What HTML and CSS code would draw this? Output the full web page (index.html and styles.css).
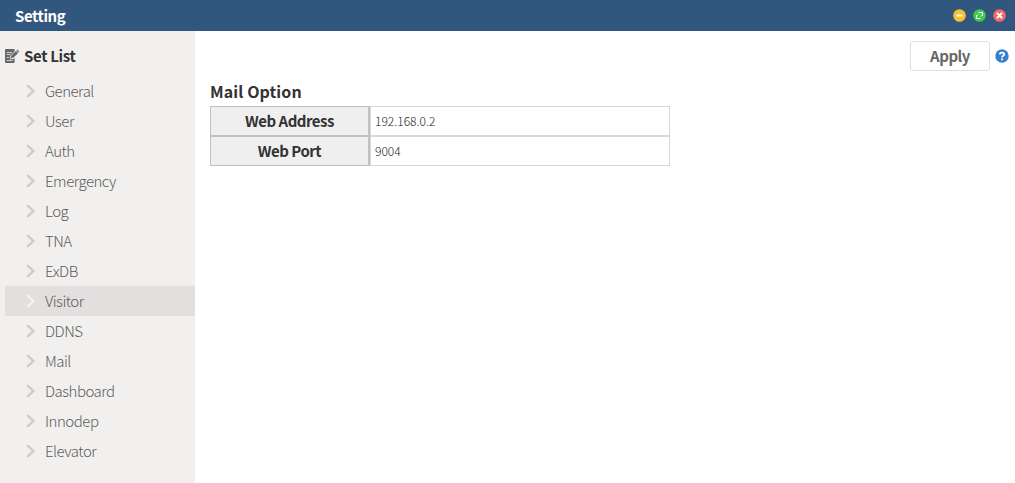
FILE: index.html
```html
<!DOCTYPE html>
<html lang="en">
<head>
<meta charset="utf-8">
<title>Setting</title>
<link rel="stylesheet" href="styles.css">
</head>
<body>
<svg width="0" height="0" class="defs">
  <symbol id="chev" viewBox="0 0 10 14"><path d="M1.2 1.1 7.4 7 1.2 12.9" fill="none" stroke="currentColor" stroke-width="2.3"/></symbol>
</svg>
<header class="titlebar">
  <h1 class="title">Setting</h1>
  <div class="controls">
    <svg viewBox="0 0 13 13"><circle cx="6.5" cy="6.5" r="6.3" fill="#f8c132"/><path d="M3.5 6.5h6" stroke="#fff" stroke-width="2"/></svg>
    <svg viewBox="0 0 13 13"><circle cx="6.5" cy="6.5" r="6.3" fill="#3dcb4b"/><path d="M5.5 3.5h4V7M7.5 9.5h-4V6M3.5 7 5 5.5M9.5 6 8 7.5" fill="none" stroke="#fff" stroke-width="1"/></svg>
    <svg viewBox="0 0 13 13"><circle cx="6.5" cy="6.5" r="6.3" fill="#f1696b"/><path d="m3.9 3.9 5.2 5.2m0-5.2L3.9 9.1" stroke="#fff" stroke-width="2"/></svg>
  </div>
</header>
<div class="body">
  <nav class="sidebar">
    <h2 class="list-title">
      <svg class="note" viewBox="0 0 14 14"><path d="M1 0h8.6v2.2L5.2 7v3.2l3.4-.3L9.6 8.8V13a1 1 0 0 1-1 1H1a1 1 0 0 1-1-1V1a1 1 0 0 1 1-1z" fill="#666"/><path d="M1.6 3.5h5.4M1.6 5.5h3.8M1.6 8.5h2.6M1.6 11.5h6" stroke="#f2f0ef" stroke-width=".8"/><path d="m5.8 9.5.6-3 4.5-4.6 2.2 2.1-4.5 4.6zM11.4 1.4l.9-.9L14.2 2.5l-.7.9z" fill="#666"/></svg>
      <span>Set List</span>
    </h2>
    <ul class="menu">
      <li class="item"><svg><use href="#chev"/></svg>General</li>
      <li class="item"><svg><use href="#chev"/></svg>User</li>
      <li class="item"><svg><use href="#chev"/></svg>Auth</li>
      <li class="item"><svg><use href="#chev"/></svg>Emergency</li>
      <li class="item"><svg><use href="#chev"/></svg>Log</li>
      <li class="item"><svg><use href="#chev"/></svg>TNA</li>
      <li class="item"><svg><use href="#chev"/></svg>ExDB</li>
      <li class="item active"><svg><use href="#chev"/></svg>Visitor</li>
      <li class="item"><svg><use href="#chev"/></svg>DDNS</li>
      <li class="item"><svg><use href="#chev"/></svg>Mail</li>
      <li class="item"><svg><use href="#chev"/></svg>Dashboard</li>
      <li class="item"><svg><use href="#chev"/></svg>Innodep</li>
      <li class="item"><svg><use href="#chev"/></svg>Elevator</li>
    </ul>
  </nav>
  <main class="content">
    <div class="toolbar">
      <button class="apply">Apply</button>
      <svg class="help" viewBox="0 0 14 14"><circle cx="7" cy="7" r="6.7" fill="#3580cc"/><path d="M4.8 5.6C4.8 3.1 9.2 3.1 9.2 5.4 9.2 6.8 7 6.8 7 8.5" fill="none" stroke="#fff" stroke-width="1.8"/><path d="M6.1 9.4h1.8v1.8H6.1z" fill="#fff"/></svg>
    </div>
    <h3 class="section-title">Mail Option</h3>
    <div class="form">
      <div class="label">Web Address</div><div class="value">192.168.0.2</div>
      <div class="label">Web Port</div><div class="value">9004</div>
    </div>
  </main>
</div>
</body>
</html>
```
FILE: styles.css
```css
* { box-sizing: border-box; }
body {
  margin: 0;
  height: 483px;
  display: flex;
  flex-direction: column;
  overflow: hidden;
  background: #fff;
  color: #333;
  font-family: "Noto Sans CJK KR", "Noto Sans", sans-serif;
}
h1, h2, h3, ul { margin: 0; padding: 0; }
.defs { position: absolute; }
.titlebar {
  height: 31px;
  flex: none;
  display: flex;
  justify-content: space-between;
  align-items: center;
  padding: 0 9px 0 15px;
  background: #32577f;
}
.title { font-size: 15px; line-height: 31px; font-weight: 700; letter-spacing: -0.45px; color: #fff; }
.controls { display: flex; gap: 7px; }
.controls svg { width: 13px; height: 13px; }
.body { flex: 1; display: flex; }
.sidebar { width: 195px; padding: 10px 0 0 5px; background: #f2f0ef; }
.list-title {
  display: flex;
  align-items: center;
  gap: 5px;
  height: 30px;
  margin-bottom: 5px;
  font-size: 15px;
  line-height: 30px;
  letter-spacing: -0.35px;
}
.note { width: 14px; height: 14px; overflow: visible; }
.menu { list-style: none; }
.item {
  display: flex;
  align-items: center;
  height: 30px;
  padding-left: 21px;
  font-size: 15px;
  font-weight: 300;
  line-height: 30px;
  letter-spacing: -0.5px;
  color: #5c5c5c;
}
.item svg { width: 10px; height: 14px; margin-right: 9px; color: #ccc; }
.active { background: #e3dfde; }
.active svg { color: #f4f2f2; }
.content { flex: 1; padding: 10px 6px 0 15px; }
.toolbar { display: flex; justify-content: flex-end; align-items: center; gap: 5px; }
.apply {
  width: 80px;
  height: 30px;
  padding: 0;
  border: 1px solid #e0e0e0;
  border-radius: 3px;
  background: #fff;
  color: #666;
  font: 700 15px/28px "Noto Sans CJK KR", "Noto Sans", sans-serif;
  letter-spacing: -0.5px;
}
.help { width: 14px; height: 14px; }
.section-title { margin-top: 5px; font-size: 16px; line-height: 30px; letter-spacing: 0.1px; }
.form { display: grid; grid-template-columns: 160px 300px; grid-auto-rows: 30px; }
.label {
  border: 1px solid #c1c1c1;
  border-right-width: 2px;
  background: #efefef;
  text-align: center;
  font-size: 15px;
  font-weight: 700;
  line-height: 28px;
  letter-spacing: -0.5px;
}
.value {
  border: 1px solid #d8d8d8;
  padding-left: 4px;
  font-size: 12px;
  font-weight: 300;
  line-height: 28px;
  color: #222;
}
```
